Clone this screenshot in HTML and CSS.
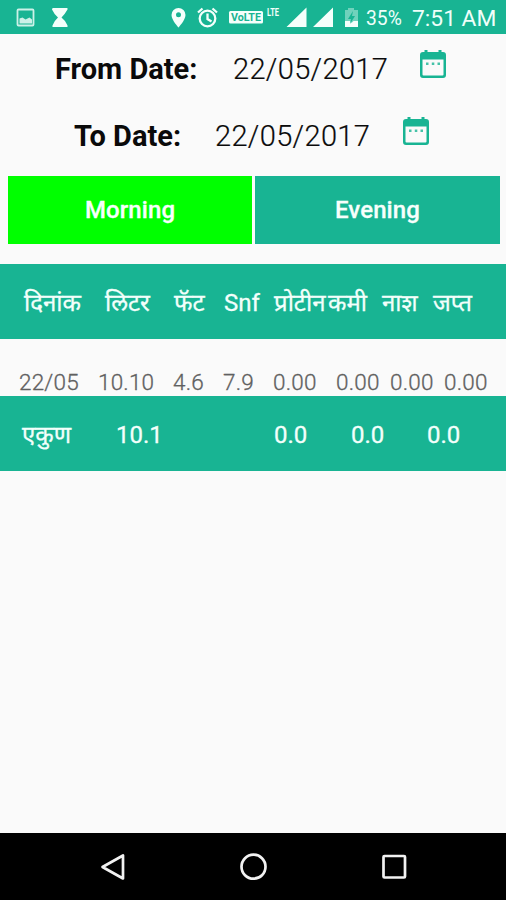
FILE: index.html
```html
<!DOCTYPE html>
<html lang="mr">
<head>
<meta charset="utf-8">
<title>Milk Report</title>
<link rel="stylesheet" href="styles.css">
</head>
<body>
<div class="screen">
  <header class="status">
    <svg class="status-icons" width="366" height="34" viewBox="0 0 366 34" fill="#f4fffb">
      <g opacity=".82"><rect x="17.500" y="9.500" width="16" height="16" rx="1" fill="none" stroke="#f4fffb" stroke-width="1.800"/><path d="M19.500 23.500v-5l3-1 3 2 4-2 2.500 2v4z"/></g>
      <path d="M53 8h14q1 0 .5 1.500Q65 14 61.500 17.500 66 21 67.500 25.500 68 27 67 27H53q-1 0-.5-1.500Q54 21 58 17.500 54 14 52 9.500 52 8 53 8z"/>
      <path fill-rule="evenodd" d="M178.500 8a7 7 0 0 0-7 7c0 5 7 12.500 7 12.500s7-7.500 7-12.500a7 7 0 0 0-7-7zm0 4.300a2.500 2.500 0 1 1 0 5 2.500 2.500 0 0 1 0-5z"/>
      <g fill="none" stroke="#f4fffb" stroke-width="2.300"><circle cx="207.500" cy="18.500" r="7.800"/><path d="M207.500 13.500v5.500l4 2.500M198 12.500l4.500-4M217 12.500l-4.500-4"/></g>
      <rect x="229" y="11" width="34" height="12.500" rx="1.500"/>
      <text x="231" y="21.300" class="volte" textLength="30" lengthAdjust="spacingAndGlyphs">VoLTE</text>
      <text x="267" y="16" class="lte" textLength="12" lengthAdjust="spacingAndGlyphs">LTE</text>
      <path d="M286.500 27L306.500 7.500V27zM313 27L333 7.500V27z"/>
      <path opacity=".4" d="M348 8h6v2h4v17h-13V10h3z"/>
      <path d="M345 21l5 0 1.500 2 2-2H358v6h-13z"/><path fill="#18b493" d="M353 11l-5 8h3l-1 5 5-8h-3z"/>
    </svg>
    <span class="battery">35%</span>
    <span class="clock">7:51 AM</span>
  </header>
  <section class="dates">
    <div class="date-row from"><b>From Date:</b><span>22/05/2017</span>
      <svg class="cal" viewBox="0 0 26 28"><path fill="#18b493" fill-rule="evenodd" d="M4.500 0h3v2h11V0h3v2H23q3 0 3 3v20q0 3-3 3H3q-3 0-3-3V5q0-3 3-3h1.500zM2.500 9.500v15q0 1 1 1h19q1 0 1-1v-15z"/><path fill="#18b493" opacity=".8" d="M6 12.500h2.500V15H6zM11.800 12.500h2.500V15h-2.500zM17.500 12.500H20V15h-2.500z"/></svg>
    </div>
    <div class="date-row to"><b>To Date:</b><span>22/05/2017</span>
      <svg class="cal" viewBox="0 0 26 28"><path fill="#18b493" fill-rule="evenodd" d="M4.500 0h3v2h11V0h3v2H23q3 0 3 3v20q0 3-3 3H3q-3 0-3-3V5q0-3 3-3h1.500zM2.500 9.500v15q0 1 1 1h19q1 0 1-1v-15z"/><path fill="#18b493" opacity=".8" d="M6 12.500h2.500V15H6zM11.800 12.500h2.500V15h-2.500zM17.500 12.500H20V15h-2.500z"/></svg>
    </div>
  </section>
  <nav class="tabs"><div class="tab active">Morning</div><div class="tab">Evening</div></nav>
  <main class="report">
    <div class="row head"><span>दिनांक</span><span>लिटर</span><span>फॅट</span><span>Snf</span><span>प्रोटीन</span><span>कमी</span><span>नाश</span><span>जप्त</span></div>
    <div class="row data"><span>22/05</span><span>10.10</span><span>4.6</span><span>7.9</span><span>0.00</span><span>0.00</span><span>0.00</span><span>0.00</span></div>
    <div class="row total"><span>एकुण</span><span>10.1</span><span>0.0</span><span>0.0</span><span>0.0</span></div>
  </main>
  <footer class="navbar">
    <svg width="28" height="30" viewBox="0 0 28 30"><path d="M3.500 15L24 3.500v23z"/></svg>
    <svg width="28" height="30" viewBox="0 0 28 30"><circle cx="13.500" cy="14.700" r="12"/></svg>
    <svg width="28" height="30" viewBox="0 0 28 30"><rect x="3.500" y="4" width="21.500" height="21.500" rx="1"/></svg>
  </footer>
</div>
</body>
</html>
```
FILE: styles.css
```css
* { box-sizing: border-box; }
body { margin: 0; font-family: Roboto, "Noto Sans", "Noto Sans Devanagari", sans-serif; }
.screen { width: 506px; height: 900px; display: flex; flex-direction: column; background: #fafafa; overflow: hidden; }
.status { height: 34px; flex: none; display: flex; background: #18b493; color: #effffa; white-space: nowrap; line-height: 37px; }
.status-icons { flex: none; }
.volte { font: bold 11px Roboto, sans-serif; fill: #18b493; }
.lte { font: bold 10px Roboto, sans-serif; }
.battery { width: 46px; font-size: 19.3px; }
.clock { font-size: 22.8px; }
.dates { height: 142px; flex: none; color: #0a0a0a; }
.date-row { display: grid; font-size: 29px; line-height: 34px; white-space: nowrap; }
.date-row b { font-weight: 700; }
.date-row span { font-weight: 300; letter-spacing: 0.35px; -webkit-text-stroke: 0.2px #0a0a0a; }
.from { grid-template-columns: 178px 187px 26px; padding: 18px 0 0 55px; }
.to { grid-template-columns: 141px 187.500px 26px; padding: 33px 0 0 74px; }
.cal { width: 26px; height: 28px; margin-top: -2px; }
.tabs { height: 67px; flex: none; display: grid; grid-template-columns: 244px 245px; column-gap: 3px; padding: 0 0 1px 8px; }
.tab { background: #18b493; color: #f7fffc; font-size: 24px; font-weight: 500; line-height: 68px; text-align: center; letter-spacing: 0.1px; -webkit-text-stroke: 0.3px #f7fffc; }
.active { background: #00ff00; }
.report { flex: 1; padding-top: 21px; }
.row { display: grid; white-space: nowrap; }
.head, .total { background: #18b493; color: #f2fffb; font-size: 24px; -webkit-text-stroke: 0.3px #f2fffb; }
.head { height: 75px; line-height: 78px; padding-left: 24px; grid-template-columns: 81px 69px 50px 50px 54px 54px 51px 60px; }
.data { height: 57px; padding: 29px 0 0 19px; line-height: 28px; color: #606060; font-size: 22.5px; letter-spacing: 0.2px; grid-template-columns: 79px 75px 50px 50px 63px 54px 54px 50px; }
.data span { font-weight: 300; -webkit-text-stroke: 0.3px #606060; }
.total { height: 75px; line-height: 78px; padding-left: 22px; grid-template-columns: 94px 158px 77px 76px 60px; }
.navbar { height: 67px; flex: none; display: flex; justify-content: space-between; padding: 19px 98px 0 99px; background: #000; }
.navbar svg { fill: none; stroke: #f2f2f2; stroke-width: 2.7; stroke-linejoin: round; }
```
